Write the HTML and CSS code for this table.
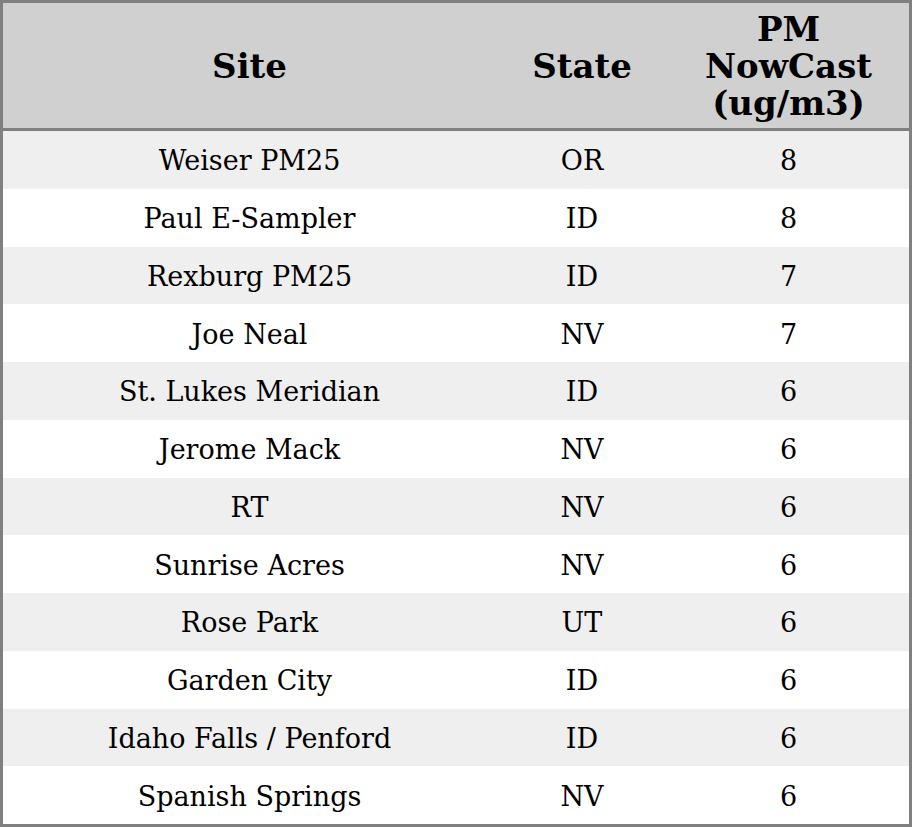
FILE: index.html
```html
<!DOCTYPE html>
<html>
<head>
<meta charset="utf-8">
<link rel="stylesheet" href="styles.css">
</head>
<body>
<table class="aq">
  <colgroup>
    <col class="c-site">
    <col class="c-state">
    <col class="c-pm">
  </colgroup>
  <thead>
    <tr><th>Site</th><th>State</th><th>PM<br>NowCast<br>(ug/m3)</th></tr>
  </thead>
  <tbody>
    <tr><td>Weiser PM25</td><td>OR</td><td>8</td></tr>
    <tr><td>Paul E-Sampler</td><td>ID</td><td>8</td></tr>
    <tr><td>Rexburg PM25</td><td>ID</td><td>7</td></tr>
    <tr><td>Joe Neal</td><td>NV</td><td>7</td></tr>
    <tr><td>St. Lukes Meridian</td><td>ID</td><td>6</td></tr>
    <tr><td>Jerome Mack</td><td>NV</td><td>6</td></tr>
    <tr><td>RT</td><td>NV</td><td>6</td></tr>
    <tr><td>Sunrise Acres</td><td>NV</td><td>6</td></tr>
    <tr><td>Rose Park</td><td>UT</td><td>6</td></tr>
    <tr><td>Garden City</td><td>ID</td><td>6</td></tr>
    <tr><td>Idaho Falls / Penford</td><td>ID</td><td>6</td></tr>
    <tr><td>Spanish Springs</td><td>NV</td><td>6</td></tr>
  </tbody>
</table>
</body>
</html>
```

FILE: styles.css
```css
html, body {
  margin: 0;
  padding: 0;
  background: #ffffff;
}
.aq {
  width: 912px;
  height: 827px;
  border-collapse: separate;
  border-spacing: 0;
  border: 3px solid #808080;
  table-layout: fixed;
  font-family: "DejaVu Serif", serif;
  color: #000;
}
.c-site { width: 493px; }
.c-state { width: 172px; }
.c-pm { width: 241px; }
.aq th {
  height: 124px;
  padding: 1px 0 0 0;
  background: #d0d0d0;
  border-bottom: 3px solid #808080;
  font-size: 34px;
  font-weight: bold;
  line-height: 37px;
  text-align: center;
  vertical-align: middle;
}
.aq td {
  height: 55.75px;
  padding: 2px 0 0 0;
  font-size: 27px;
  text-align: center;
  vertical-align: middle;
}
.aq tbody tr:nth-child(odd) td {
  background: #efefef;
}
```
